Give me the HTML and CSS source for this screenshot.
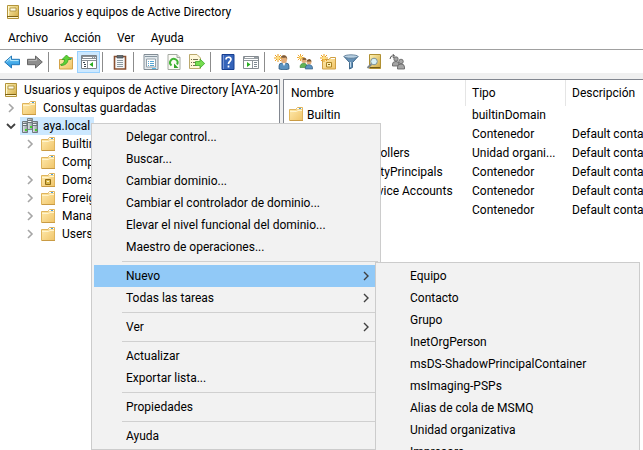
FILE: index.html
```html
<!DOCTYPE html>
<html lang="es">
<head>
<meta charset="utf-8">
<meta name="viewport" content="width=device-width, initial-scale=1">
<title>Usuarios y equipos de Active Directory</title>
<link rel="stylesheet" href="styles.css">
</head>
<body>
<svg class="sprite" aria-hidden="true">
  <defs>
    <linearGradient id="g-folder" x1="0" y1="0" x2="1" y2="1">
      <stop offset="0" stop-color="#ffecb0"/><stop offset="1" stop-color="#f0c468"/>
    </linearGradient>
    <linearGradient id="g-book" x1="0" y1="0" x2="1" y2="1">
      <stop offset="0" stop-color="#fff3b5"/><stop offset="1" stop-color="#d0a840"/>
    </linearGradient>
    <linearGradient id="g-blue" x1="0" y1="0" x2="0" y2="1">
      <stop offset="0" stop-color="#7cd0f6"/><stop offset="1" stop-color="#1c8ede"/>
    </linearGradient>
    <linearGradient id="g-tower" x1="0" y1="0" x2="1" y2="0">
      <stop offset="0" stop-color="#e4e8ea"/><stop offset="1" stop-color="#8d979c"/>
    </linearGradient>
  </defs>
  <symbol id="book" viewBox="0 0 16 16">
    <path d="M2.500 1.500H13.500V14.500H2.500Z" fill="url(#g-book)" stroke="#b3943a"/>
    <path d="M5 4H11V7H5Z" fill="#fffbe3" stroke="#a58a38" stroke-width=".8"/>
    <path d="M2 12.500H13" stroke="#7e6213"/>
    <path d="M3 13.500H13" stroke="#fff6cf"/>
    <path d="M3.500 2V12" stroke="#fff8cf"/>
  </symbol>
  <symbol id="folder" viewBox="0 0 16 16">
    <path d="M.5 3.500H7L8.500 1.500H13.500V14.500H.500Z" fill="url(#g-folder)" stroke="#dfb45c"/>
    <path d="M8 2.500H13" stroke="#fff"/>
    <path d="M10 2.500H12" stroke="#4b9edb"/>
    <path d="M1 5.500H7.500L9 4.500H13" fill="none" stroke="#fff4cd"/>
    <path d="M1 14.500H14" stroke="#c99b44"/>
  </symbol>
  <symbol id="folder-ou" viewBox="0 0 16 16">
    <use href="#folder"/>
    <path d="M4.500 7.500H9.500V12.500H4.500Z" fill="#d9b64a" stroke="#8f6d14"/>
    <path d="M6 9.500H8" stroke="#fff6ce"/>
  </symbol>
  <symbol id="domain" viewBox="0 0 16 16">
    <path d="M5.500 .500H10.500V11.500H5.500Z" fill="url(#g-tower)" stroke="#7d868b"/>
    <path d="M.500 3.500H5.500V14.500H.500Z" fill="url(#g-tower)" stroke="#6f787d"/>
    <path d="M10.500 3.500H15.500V14.500H10.500Z" fill="url(#g-tower)" stroke="#6f787d"/>
    <path d="M6 2.500H10M6 4.500H10M1 5.500H5M1 7.500H5M11 5.500H15M11 7.500H15" stroke="#6c767b"/>
    <path d="M6 3.500H9M1 6.500H4M11 6.500H14" stroke="#f4f6f7"/>
    <path d="M3 11H5V13H3ZM13 11H15V13H13ZM8 8H10V10H8Z" fill="#3fd32f"/>
  </symbol>
  <symbol id="chev-closed" viewBox="0 0 10 10">
    <path d="M3 1L7 5L3 9" fill="none" stroke="#a6a6a6" stroke-width="1.600"/>
  </symbol>
  <symbol id="chev-open" viewBox="0 0 10 10">
    <path d="M1 3L5 7L9 3" fill="none" stroke="#404040" stroke-width="1.800"/>
  </symbol>
  <symbol id="back" viewBox="0 0 16 16">
    <path d="M.7 8L7.500 2V5.300H15.500V10.700H7.500V14Z" fill="url(#g-blue)" stroke="#2478b8"/>
    <path d="M2.500 7.500L6.500 4V6.500H14.500" fill="none" stroke="#b5e7fb"/>
  </symbol>
  <symbol id="forward" viewBox="0 0 16 16">
    <path d="M15.300 8L8.500 2V5.300H.500V10.700H8.500V14Z" fill="#8d8d8d" stroke="#666"/>
    <path d="M1.500 6.500H9.500V4.500" fill="none" stroke="#b5b5b5"/>
  </symbol>
  <symbol id="up-folder" viewBox="0 0 16 16">
    <path d="M1.500 5.500H7L8.500 3.500H14.500V15H1.500Z" fill="url(#g-folder)" stroke="#d3a348"/>
    <path d="M9 4.500H14" stroke="#fff"/><path d="M12 4.500H14" stroke="#4b9edb"/>
    <path d="M2.500 10.500C5.500 10 6.500 8 6.500 5.500H4L8.500 1L13 5.500H10C10 9 7 11.500 3 11.500Z" fill="#5ed337" stroke="#37a021" stroke-width=".8"/>
  </symbol>
  <symbol id="console-tree" viewBox="0 0 16 16">
    <path d="M.500 1.500H15.500V14.500H.500Z" fill="#fff" stroke="#7c8288"/>
    <path d="M1 2H15V5H1Z" fill="#8a9096"/>
    <path d="M2 3.500H11" stroke="#fff"/><path d="M12 3.500H13M14 3.500H15" stroke="#e8edf0"/>
    <path d="M1 6.500H15M6.500 6V14" stroke="#8b9197"/>
    <path d="M2 8.500H4M3 10.500H5M3 12.500H5" stroke="#3b4852"/>
    <path d="M12 8V13L8.500 10.500Z" fill="#27ae20"/>
  </symbol>
  <symbol id="clipboard" viewBox="0 0 16 16">
    <path d="M2.500 2.500H13.500V15H2.500Z" fill="#f5f8fa" stroke="#8a4f2f" stroke-width="1.600"/>
    <path d="M5 1.500H11V4H5Z" fill="#656e73" stroke="#454c50" stroke-width=".7"/>
    <path d="M5 6.500H11M5 8.500H11M5 10.500H11M5 12.500H11" stroke="#8d99a0"/>
  </symbol>
  <symbol id="properties" viewBox="0 0 16 16">
    <path d="M1 .500H15V15.500H1Z" fill="#e3e9ed" stroke="#828d95"/>
    <path d="M2 2.500H14" stroke="#8796a1"/>
    <path d="M3.500 5H12.500V13H3.500Z" fill="#fff" stroke="#93a0aa"/>
    <path d="M5 7.500H6M7 7.500H11M5 9.500H6M7 9.500H11M5 11.500H6M7 11.500H11" stroke="#55a6d4"/>
    <path d="M9 14.500H13" stroke="#51b8e4"/>
  </symbol>
  <symbol id="refresh" viewBox="0 0 16 16">
    <path d="M2 .500H11L14 3.500V15.500H2Z" fill="#fbfbf5" stroke="#a5aaa2"/>
    <path d="M11 .500V3.500H14" fill="#e5e7df" stroke="#a5aaa2"/>
    <path d="M5.500 11.500A3.700 3.700 0 1 1 11 10.500" fill="none" stroke="#41b635" stroke-width="2"/>
    <path d="M8 9.500V14H12.500Z" fill="#32a428"/>
  </symbol>
  <symbol id="export" viewBox="0 0 16 16">
    <path d="M.500 .500H8L11.500 4V14.500H.500Z" fill="#fff8da" stroke="#bba96d"/>
    <path d="M2 5.500H3M4 5.500H9M2 8.500H3M4 8.500H8M2 11.500H3M4 11.500H8" stroke="#75714f"/>
    <path d="M6.500 7.500H11V5L15.700 9.500L11 14V11.500H6.500Z" fill="#76dc4f" stroke="#3eaa2c" stroke-width=".8"/>
  </symbol>
  <symbol id="help" viewBox="0 0 16 16">
    <path d="M2 .500H14V15.500H2Z" fill="#3564ba" stroke="#173f91"/>
    <path d="M3.500 1V15" stroke="#7896d5"/>
    <path d="M6 5.500C6 2.500 11 2.500 11 5.300C11 7.300 8.500 7.500 8.500 10M8.500 11.500V13.500" fill="none" stroke="#fff" stroke-width="1.700"/>
  </symbol>
  <symbol id="action-pane" viewBox="0 0 16 16">
    <path d="M.500 2.500H15.500V14.500H.500Z" fill="#fff" stroke="#858b91"/>
    <path d="M1 3H15V5H1Z" fill="#9aa1a6"/><path d="M2 3.500H11" stroke="#fff"/>
    <path d="M1 6.500H15M9.500 6V14" stroke="#8e959b"/>
    <path d="M11 8.500H14M11 10.500H14M11 12.500H14" stroke="#7f8a92"/>
    <path d="M4 8V13L7.500 10.500Z" fill="#27ae20"/>
  </symbol>
  <symbol id="spark" viewBox="0 0 8 8">
    <path d="M4 0V8M0 4H8M1 1L7 7M7 1L1 7" stroke="#eb9f1d"/>
    <circle cx="4" cy="4" r="1.500" fill="#ffe27b"/>
  </symbol>
  <symbol id="person" viewBox="0 0 12 16">
    <path d="M1 15V12Q1 9 4 9H8Q11 9 11 12V15Q6 17 1 15Z" fill="#5b92bf" stroke="#285273" stroke-width=".7"/>
    <path d="M4.500 9L6 12L7.500 9Z" fill="#fff"/>
    <ellipse cx="6" cy="5.200" rx="3" ry="4" fill="#e3ae7b"/>
    <path d="M2.700 5C2 0 9.500-.5 9.300 5.500L8 3.500Q5 4 3.500 3.500Z" fill="#7a5a3a"/>
  </symbol>
  <symbol id="new-user" viewBox="0 0 16 16">
    <use href="#person" x="4" y="0" width="12" height="16"/>
    <use href="#spark" x="0" y="0" width="8" height="8"/>
  </symbol>
  <symbol id="new-group" viewBox="0 0 16 16">
    <circle cx="7" cy="6.500" r="2.500" fill="#e3ae7b"/>
    <path d="M4.500 6Q5 3.500 7.500 3.500Q9.500 4 9.500 6Z" fill="#8a6238"/>
    <path d="M3 13.500Q3 9.300 7 9.300Q10 9.300 10 13.500Z" fill="#62b455" stroke="#3d7f37" stroke-width=".6"/>
    <circle cx="12" cy="8" r="2.500" fill="#e3ae7b"/>
    <path d="M9.500 7.500Q10 5 12.500 5Q14.500 5.500 14.500 7.500Z" fill="#73532f"/>
    <path d="M8.300 15Q8 10.700 12 10.700Q15.700 10.700 15.700 15Z" fill="#5b92bf" stroke="#285273" stroke-width=".6"/>
    <use href="#spark" x="0" y="0" width="7" height="7"/>
  </symbol>
  <symbol id="new-ou" viewBox="0 0 16 16">
    <path d="M2.500 5.500H9L10.500 3.500H15.500V15H2.500Z" fill="url(#g-folder)" stroke="#d0a044"/>
    <path d="M11 4.500H15" stroke="#fff"/>
    <path d="M6.500 8.500H11.500V13H6.500Z" fill="#fff0b3" stroke="#ad8424"/>
    <path d="M8 10.500H10" stroke="#8a6819"/>
    <use href="#spark" x="0" y="0" width="8" height="8"/>
  </symbol>
  <symbol id="filter" viewBox="0 0 16 16">
    <path d="M1 2.500L6.500 8.500V15L9.500 13.500V8.500L15 2.500Z" fill="#6691b6" stroke="#426b8e"/>
    <ellipse cx="8" cy="2.500" rx="7" ry="1.700" fill="#b8d0e2" stroke="#54748e" stroke-width=".8"/>
    <path d="M7.500 8V13" stroke="#c3d9e9"/>
  </symbol>
  <symbol id="find" viewBox="0 0 16 16">
    <path d="M3.500 .500H14.500V14.500H3.500Z" fill="url(#g-book)" stroke="#b09033"/>
    <path d="M4 13.500H14" stroke="#735a13"/>
    <path d="M5.500 10L1.500 14" stroke="#7d8589" stroke-width="2"/>
    <circle cx="8" cy="7.500" r="3.300" fill="#d8f0f5" stroke="#7d9298"/>
  </symbol>
  <symbol id="add-to-group" viewBox="0 0 16 16">
    <path d="M1 5Q1 1.500 5 1.500M3.500 0L5.500 1.600L4 4" fill="none" stroke="#555"/>
    <g fill="#a5a5a5" stroke="#5d5d5d" stroke-width=".8">
      <circle cx="7" cy="5" r="2.200"/><path d="M3.500 12V10Q3.500 7.500 7 7.500Q10 7.500 10 10V12Z"/>
      <circle cx="12" cy="7.500" r="2.300"/><path d="M8.500 15V13Q8.500 10 12 10Q15.500 10 15.500 13V15Z"/>
    </g>
  </symbol>
</svg>

<div class="window">
  <header class="titlebar">
    <svg class="icon"><use href="#book"/></svg>
    <h1>Usuarios y equipos de Active Directory</h1>
  </header>
  <nav class="menubar">
    <button>Archivo</button>
    <button>Acción</button>
    <button>Ver</button>
    <button>Ayuda</button>
  </nav>
  <div class="toolbar" role="toolbar">
    <button class="tool" aria-label="Atrás"><svg class="icon"><use href="#back"/></svg></button>
    <button class="tool" aria-label="Adelante"><svg class="icon"><use href="#forward"/></svg></button>
    <span class="divider"></span>
    <button class="tool" aria-label="Subir un nivel"><svg class="icon"><use href="#up-folder"/></svg></button>
    <button class="tool pressed" aria-label="Mostrar árbol" aria-pressed="true"><svg class="icon"><use href="#console-tree"/></svg></button>
    <span class="divider"></span>
    <button class="tool" aria-label="Pegar"><svg class="icon"><use href="#clipboard"/></svg></button>
    <span class="divider"></span>
    <button class="tool" aria-label="Propiedades"><svg class="icon"><use href="#properties"/></svg></button>
    <button class="tool" aria-label="Actualizar"><svg class="icon"><use href="#refresh"/></svg></button>
    <button class="tool" aria-label="Exportar lista"><svg class="icon"><use href="#export"/></svg></button>
    <span class="divider"></span>
    <button class="tool" aria-label="Ayuda"><svg class="icon"><use href="#help"/></svg></button>
    <button class="tool" aria-label="Panel de acciones"><svg class="icon"><use href="#action-pane"/></svg></button>
    <span class="divider"></span>
    <button class="tool" aria-label="Nuevo usuario"><svg class="icon"><use href="#new-user"/></svg></button>
    <button class="tool" aria-label="Nuevo grupo"><svg class="icon"><use href="#new-group"/></svg></button>
    <button class="tool" aria-label="Nueva unidad organizativa"><svg class="icon"><use href="#new-ou"/></svg></button>
    <button class="tool" aria-label="Filtro"><svg class="icon"><use href="#filter"/></svg></button>
    <button class="tool" aria-label="Buscar"><svg class="icon"><use href="#find"/></svg></button>
    <button class="tool" aria-label="Agregar a un grupo"><svg class="icon"><use href="#add-to-group"/></svg></button>
  </div>

  <main class="panes">
    <section class="pane">
      <ul class="tree">
        <li><div class="node root"><span class="label"><svg class="icon"><use href="#book"/></svg>Usuarios y equipos de Active Directory [AYA-2019.aya.local]</span></div>
          <ul class="level">
            <li><div class="node"><svg class="chevron"><use href="#chev-closed"/></svg><span class="label"><svg class="icon"><use href="#folder"/></svg>Consultas guardadas</span></div></li>
            <li><div class="node"><svg class="chevron"><use href="#chev-open"/></svg><span class="label selected"><svg class="icon"><use href="#domain"/></svg>aya.local</span></div>
              <ul class="sublevel">
                <li><div class="node"><svg class="chevron"><use href="#chev-closed"/></svg><span class="label"><svg class="icon"><use href="#folder"/></svg>Builtin</span></div></li>
                <li><div class="node"><svg class="chevron"></svg><span class="label"><svg class="icon"><use href="#folder"/></svg>Computers</span></div></li>
                <li><div class="node"><svg class="chevron"><use href="#chev-closed"/></svg><span class="label"><svg class="icon"><use href="#folder-ou"/></svg>Domain Controllers</span></div></li>
                <li><div class="node"><svg class="chevron"><use href="#chev-closed"/></svg><span class="label"><svg class="icon"><use href="#folder"/></svg>ForeignSecurityPrincipals</span></div></li>
                <li><div class="node"><svg class="chevron"><use href="#chev-closed"/></svg><span class="label"><svg class="icon"><use href="#folder"/></svg>Managed Service Accounts</span></div></li>
                <li><div class="node"><svg class="chevron"><use href="#chev-closed"/></svg><span class="label"><svg class="icon"><use href="#folder"/></svg>Users</span></div></li>
              </ul>
            </li>
          </ul>
        </li>
      </ul>
    </section>
    <section class="pane">
      <table class="list">
        <colgroup><col class="col-name"><col class="col-type"><col></colgroup>
        <thead><tr><th>Nombre</th><th>Tipo</th><th>Descripción</th></tr></thead>
        <tbody>
          <tr><td><svg class="icon"><use href="#folder"/></svg>Builtin</td><td>builtinDomain</td><td></td></tr>
          <tr><td><svg class="icon"><use href="#folder"/></svg>Computers</td><td>Contenedor</td><td>Default container for upgraded computer accounts</td></tr>
          <tr><td><svg class="icon"><use href="#folder-ou"/></svg>Domain Controllers</td><td>Unidad organi...</td><td>Default container for domain controllers</td></tr>
          <tr><td><svg class="icon"><use href="#folder"/></svg>ForeignSecurityPrincipals</td><td>Contenedor</td><td>Default container for security identifiers</td></tr>
          <tr><td><svg class="icon"><use href="#folder"/></svg>Managed Service Accounts</td><td>Contenedor</td><td>Default container for managed service accounts</td></tr>
          <tr><td><svg class="icon"><use href="#folder"/></svg>Users</td><td>Contenedor</td><td>Default container for upgraded user accounts</td></tr>
        </tbody>
      </table>
    </section>
  </main>

  <ul class="menu context">
    <li><button>Delegar control...</button></li>
    <li><button>Buscar...</button></li>
    <li><button>Cambiar dominio...</button></li>
    <li><button>Cambiar el controlador de dominio...</button></li>
    <li><button>Elevar el nivel funcional del dominio...</button></li>
    <li><button>Maestro de operaciones...</button></li>
    <li class="rule"></li>
    <li class="parent"><button class="active">Nuevo<svg class="arrow" viewBox="0 0 10 10"><path d="M3 1L7 5L3 9"/></svg></button>
      <ul class="menu submenu">
        <li><button>Equipo</button></li>
        <li><button>Contacto</button></li>
        <li><button>Grupo</button></li>
        <li><button>InetOrgPerson</button></li>
        <li><button>msDS-ShadowPrincipalContainer</button></li>
        <li><button>msImaging-PSPs</button></li>
        <li><button>Alias de cola de MSMQ</button></li>
        <li><button>Unidad organizativa</button></li>
        <li><button>Impresora</button></li>
      </ul>
    </li>
    <li><button>Todas las tareas<svg class="arrow" viewBox="0 0 10 10"><path d="M3 1L7 5L3 9"/></svg></button></li>
    <li class="rule"></li>
    <li><button>Ver<svg class="arrow" viewBox="0 0 10 10"><path d="M3 1L7 5L3 9"/></svg></button></li>
    <li class="rule"></li>
    <li><button>Actualizar</button></li>
    <li><button>Exportar lista...</button></li>
    <li class="rule"></li>
    <li><button>Propiedades</button></li>
    <li class="rule"></li>
    <li><button>Ayuda</button></li>
  </ul>
</div>
</body>
</html>
```
FILE: styles.css
```css
* {
  box-sizing: border-box;
}

body {
  margin: 0;
  font: 12px/18px "Segoe UI", Roboto, "Open Sans", sans-serif;
  color: #000;
  background: #fff;
}

ul {
  list-style: none;
  margin: 0;
  padding: 0;
}

button {
  font: inherit;
  color: inherit;
  border: 0;
  padding: 0;
  background: none;
}

.sprite {
  position: absolute;
  width: 0;
  height: 0;
}

.icon {
  flex: none;
  width: 16px;
  height: 16px;
}

.window {
  position: relative;
  display: flex;
  flex-direction: column;
  height: 100vh;
  overflow: hidden;
}

.titlebar {
  display: flex;
  align-items: center;
  gap: 6px;
  height: 24px;
  padding-left: 5px;
}

.titlebar h1 {
  margin: 0;
  font-size: 12px;
  font-weight: 400;
}

.menubar {
  display: flex;
  align-items: center;
  gap: 16px;
  height: 25px;
  padding: 2px 8px 0;
}

.toolbar {
  display: flex;
  align-items: center;
  height: 24px;
  border-top: 1px solid #a0a0a0;
}

.tool {
  display: flex;
  align-items: center;
  justify-content: center;
  width: 23px;
  height: 22px;
}

.pressed {
  background: #cce8ff;
  border: 1px solid #99d1ff;
}

.divider {
  width: 8px;
  height: 20px;
  background: linear-gradient(#8c8c8c, #8c8c8c) 2px 0 / 1px 100% no-repeat;
}

.panes {
  flex: 1;
  display: grid;
  grid-template-columns: 280px minmax(0, 1fr);
  gap: 3px;
  padding-top: 6px;
  background: #f0f0f0;
}

.pane {
  overflow: hidden;
  white-space: nowrap;
  background: #fff;
  border-top: 1px solid #828790;
}

.pane:first-child {
  padding-top: 1px;
  border-right: 1px solid #828790;
}

.pane:last-child {
  border-left: 1px solid #828790;
}

.level {
  padding-left: 2px;
}

.sublevel {
  padding-left: 19px;
}

.node {
  display: flex;
  align-items: center;
  height: 18px;
  padding-left: 4px;
}

.root {
  padding-left: 1px;
}

.chevron {
  flex: none;
  width: 10px;
  height: 10px;
  margin-right: 4px;
}

.label {
  display: flex;
  align-items: center;
  gap: 5px;
  height: 18px;
  padding: 0 4px 0 2px;
}

.selected {
  background: #cce8ff;
}

.list {
  width: 100%;
  table-layout: fixed;
  border-spacing: 0;
}

.col-name {
  width: 182px;
}

.col-type {
  width: 100px;
}

.list th,
.list td {
  overflow: hidden;
  padding: 0 0 0 6px;
  text-align: left;
  font-weight: 400;
}

.list th {
  height: 26px;
  border-right: 1px solid #e5e5e5;
}

.list th:first-child {
  padding-left: 7px;
}

.list th:last-child {
  border-right: 0;
}

.list td {
  height: 19px;
  line-height: 19px;
}

.list td:first-child {
  padding-left: 5px;
}

.list .icon {
  margin-right: 2px;
  vertical-align: top;
}

.menu {
  position: absolute;
  padding: 2px;
  background: #f2f2f2;
  border: 1px solid #ccc;
  white-space: nowrap;
}

.context {
  top: 123px;
  left: 91px;
  width: 290px;
}

.submenu {
  top: -3px;
  left: calc(100% - 3px);
  width: 265px;
  z-index: 1;
}

.parent {
  position: relative;
}

.menu button {
  display: flex;
  align-items: center;
  justify-content: space-between;
  width: 100%;
  height: 22px;
  padding: 0 7px 0 32px;
  text-align: left;
}

.menu .active {
  background: #91c9f7;
}

.arrow {
  width: 10px;
  height: 10px;
  fill: none;
  stroke: #404040;
  stroke-width: 1.400;
}

.rule {
  height: 7px;
  padding: 3px 0 3px 28px;
}

.rule::before {
  content: "";
  display: block;
  height: 1px;
  background: #d0d0d0;
}
```
